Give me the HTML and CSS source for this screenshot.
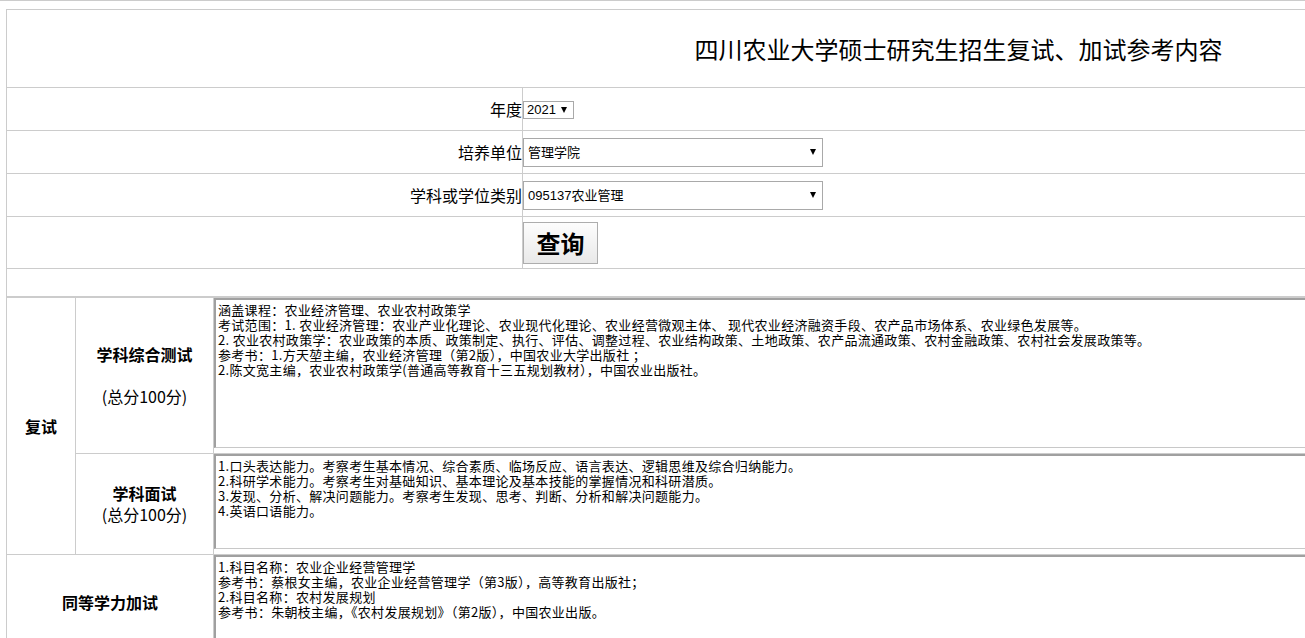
FILE: index.html
```html
<!DOCTYPE html>
<html lang="zh-CN">
<head>
<meta charset="utf-8">
<title>四川农业大学硕士研究生招生复试、加试参考内容</title>
<link rel="stylesheet" href="styles.css">
</head>
<body>
<div class="topline"></div>
<table class="query">
  <tr class="r-title"><td colspan="2" class="title">四川农业大学硕士研究生招生复试、加试参考内容</td></tr>
  <tr class="r-field"><td class="label">年度</td><td class="ctl"><span class="sel sel-year"><select><option>2021</option></select></span></td></tr>
  <tr class="r-field"><td class="label">培养单位</td><td class="ctl"><span class="sel sel-wide"><select><option>管理学院</option></select></span></td></tr>
  <tr class="r-field"><td class="label">学科或学位类别</td><td class="ctl"><span class="sel sel-wide"><select><option>095137农业管理</option></select></span></td></tr>
  <tr class="r-btn"><td class="label"></td><td class="ctl"><button class="btn" type="button">查询</button></td></tr>
  <tr class="r-empty"><td colspan="2"></td></tr>
</table>
<table class="content">
  <tr>
    <td rowspan="2" class="cat"><b>复试</b></td>
    <td class="item"><b>学科综合测试</b><br><br>(总分100分)</td>
    <td class="box"><textarea class="ta ta1" readonly>涵盖课程：农业经济管理、农业农村政策学
考试范围：1. 农业经济管理：农业产业化理论、农业现代化理论、农业经营微观主体、 现代农业经济融资手段、农产品市场体系、农业绿色发展等。
2. 农业农村政策学：农业政策的本质、政策制定、执行、评估、调整过程、农业结构政策、土地政策、农产品流通政策、农村金融政策、农村社会发展政策等。
参考书：1.方天堃主编，农业经济管理（第2版），中国农业大学出版社 ；
2.陈文宽主编，农业农村政策学(普通高等教育十三五规划教材），中国农业出版社。</textarea></td>
  </tr>
  <tr>
    <td class="item"><b>学科面试</b><br>(总分100分)</td>
    <td class="box"><textarea class="ta ta2" readonly>1.口头表达能力。考察考生基本情况、综合素质、临场反应、语言表达、逻辑思维及综合归纳能力。
2.科研学术能力。考察考生对基础知识、基本理论及基本技能的掌握情况和科研潜质。
3.发现、分析、解决问题能力。考察考生发现、思考、判断、分析和解决问题能力。
4.英语口语能力。</textarea></td>
  </tr>
  <tr>
    <td colspan="2" class="cat"><b>同等学力加试</b></td>
    <td class="box"><textarea class="ta ta3" readonly>1.科目名称：农业企业经营管理学
参考书：蔡根女主编，农业企业经营管理学（第3版），高等教育出版社；
2.科目名称：农村发展规划
参考书：朱朝枝主编，《农村发展规划》（第2版），中国农业出版。</textarea></td>
  </tr>
</table>
</body>
</html>
```

FILE: styles.css
```css
html, body {
  margin: 0;
  padding: 0;
  overflow: hidden;
  background: #fff;
}

body {
  font-family: "Noto Sans CJK SC", "Liberation Sans", sans-serif;
  color: #000;
}

.topline {
  border-top: 1px solid #ccc;
  height: 8px;
}

table {
  border-collapse: collapse;
  margin-left: 6px;
  width: 1905px;
}

td {
  border: 1px solid #ccc;
  padding: 0;
}

/* ---------- query form ---------- */
.r-title td { height: 77px; }
.r-field td { height: 42px; }
.r-btn td { height: 51px; }
.r-empty td { height: 27px; }

.title {
  font-size: 24px;
  text-align: center;
}

.label {
  width: 515px;
  text-align: right;
  font-size: 16px;
}

.ctl {
  font-size: 13px;
}

.sel {
  position: relative;
  display: inline-block;
  vertical-align: middle;
}

.sel select {
  appearance: none;
  -webkit-appearance: none;
  display: block;
  margin: 0;
  border: 1px solid #a9a9a9;
  border-radius: 0;
  background: #fff;
  color: #000;
  font-family: "Liberation Sans", "Noto Sans CJK SC", sans-serif;
  font-size: 13px;
  box-sizing: border-box;
}

.sel::after {
  content: "";
  position: absolute;
  top: 50%;
  margin-top: -3px;
  border-left: 3px solid transparent;
  border-right: 3px solid transparent;
  border-top: 6px solid #000;
  pointer-events: none;
}

.sel-year select {
  width: 51px;
  height: 18px;
  padding: 0 0 0 3px;
  line-height: 16px;
}

.sel-year::after { right: 7px; }

.sel-wide select {
  width: 300px;
  height: 29px;
  padding: 0 0 0 4px;
}

.sel-wide::after { right: 7px; }

.btn {
  display: block;
  margin: 0;
  width: 75px;
  height: 42px;
  padding: 0;
  border: 1px solid #adadad;
  border-radius: 0;
  background: linear-gradient(#fdfdfd, #e9e9e9);
  font-family: "Noto Sans CJK SC", sans-serif;
  font-size: 24px;
  font-weight: bold;
  color: #000;
}

/* ---------- content table ---------- */
.cat {
  width: 68px;
  text-align: center;
  font-size: 16px;
  line-height: 21px;
}

.item {
  width: 137px;
  text-align: center;
  font-size: 16px;
  line-height: 21px;
}

.box {
  vertical-align: top;
}

.ta {
  display: block;
  box-sizing: border-box;
  width: 1690px;
  margin: 0 0 5px 0;
  padding: 2px;
  border-style: solid;
  border-width: 2px 1px 1px 2px;
  border-color: #a0a0a0 #c8c8c8 #c8c8c8 #a0a0a0;
  font-family: "Noto Sans CJK SC", "Liberation Sans", sans-serif;
  font-size: 13px;
  line-height: 15px;
  letter-spacing: 0.3px;
  color: #000;
  resize: none;
  overflow: hidden;
  background: #fff;
}

.ta1 { height: 150px; }
.ta2 { height: 95px; }
.ta3 { height: 90px; }
```
